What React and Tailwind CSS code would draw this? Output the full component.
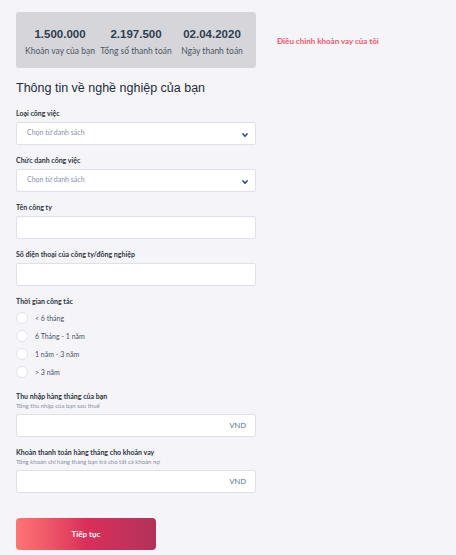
import React from "react";

const labelCls = "text-[7px] font-bold text-[#2f3542] leading-[9px]";
const subCls = "text-[6px] text-[#8a8fa0] leading-[8px] mt-[1px]";
const boxCls = "h-[23px] w-[240px] bg-white border border-[#dfe0ea] rounded-[2px]";

function Chevron() {
  return (
    <svg width="6" height="5" viewBox="0 0 6 5" className="absolute right-[7px] top-[10px]">
      <path d="M1 1 L3 3.2 L5 1" stroke="#3a5470" strokeWidth="1.7" fill="none" strokeLinecap="round" strokeLinejoin="round" />
    </svg>
  );
}

function Select({ label, mt }) {
  return (
    <div className={mt}>
      <div className={labelCls}>{label}</div>
      <div className={`${boxCls} relative mt-[4px] flex items-center pl-[10px]`}>
        <span className="text-[7px] text-[#8a8fa6] pb-[3px]">Chọn từ danh sách</span>
        <Chevron />
      </div>
    </div>
  );
}

function Input({ label, sub, mt, unit }) {
  return (
    <div className={mt}>
      <div className={labelCls}>{label}</div>
      {sub && <div className={subCls}>{sub}</div>}
      <div className={`${boxCls} mt-[4px] flex items-center justify-end pr-[9px]`}>
        {unit && <span className="text-[8px] text-[#5a6b85] pb-[2px]" style={{ fontFamily: "'Open Sans', sans-serif" }}>{unit}</span>}
      </div>
    </div>
  );
}

function Radio({ text }) {
  return (
    <div className="flex items-center h-[18px]">
      <div className="w-[12px] h-[12px] rounded-full bg-white border border-[#e2e3ec]" />
      <span className="ml-[7px] text-[7px] text-[#4a5168]">{text}</span>
    </div>
  );
}

export default function App() {
  return (
    <div
      className="w-[456px] h-[555px] bg-[#f4f4f9] overflow-hidden"
      style={{ fontFamily: "Lato, 'Noto Sans', sans-serif" }}
    >
      <div className="flex items-start pt-[12px] pl-[16px]">
        <div className="w-[240px] h-[56px] rounded-[3px] bg-[#d6d5da] flex items-center justify-center pt-[2px]">
          {[
            ["1.500.000", "Khoản vay của bạn"],
            ["2.197.500", "Tổng số thanh toán"],
            ["02.04.2020", "Ngày thanh toán"],
          ].map(([n, l]) => (
            <div key={n} className="w-[76px] flex flex-col items-center">
              <div
                className="text-[11.5px] font-bold text-[#2d3e50] leading-[14px]"
                style={{ fontFamily: "'Liberation Sans', Arial, sans-serif" }}
              >
                {n}
              </div>
              <div className="text-[8.5px] text-[#4d5566] leading-[10px] mt-[5px] whitespace-nowrap">{l}</div>
            </div>
          ))}
        </div>
        <div className="ml-[21px] mt-[23px] text-[8px] font-bold text-[#f3566f]">Điều chỉnh khoản vay của tôi</div>
      </div>

      <div className="pl-[16px]">
        <h1
          className="mt-[11px] text-[12.5px] text-[#1f2c3c] leading-[18px]"
          style={{ fontFamily: "'Liberation Sans', Arial, sans-serif" }}
        >
          Thông tin về nghề nghiệp của bạn
        </h1>

        <Select label="Loại công việc" mt="mt-[12px]" />
        <Select label="Chức danh công việc" mt="mt-[11px]" />
        <Input label="Tên công ty" mt="mt-[11px]" />
        <Input label="Số điện thoại của công ty/đồng nghiệp" mt="mt-[11px]" />

        <div className="mt-[11px]">
          <div className={labelCls}>Thời gian công tác</div>
          <div className="mt-[3px] flex flex-col">
            <Radio text="< 6 tháng" />
            <Radio text="6 Tháng - 1 năm" />
            <Radio text="1 năm - 3 năm" />
            <Radio text="> 3 năm" />
          </div>
        </div>

        <Input label="Thu nhập hàng tháng của bạn" sub="Tổng thu nhập của bạn sau thuế" mt="mt-[11px]" unit="VND" />
        <Input
          label="Khoản thanh toán hàng tháng cho khoản vay"
          sub="Tổng khoản chi hàng tháng bạn trả cho tất cả khoản nợ"
          mt="mt-[11px]"
          unit="VND"
        />

        <button className="mt-[25px] w-[140px] h-[32px] rounded-[4px] bg-gradient-to-r from-[#ff7474] via-[#da2f5a] to-[#b2325a] text-white text-[8px] font-bold block">
          Tiếp tục
        </button>
      </div>
    </div>
  );
}
